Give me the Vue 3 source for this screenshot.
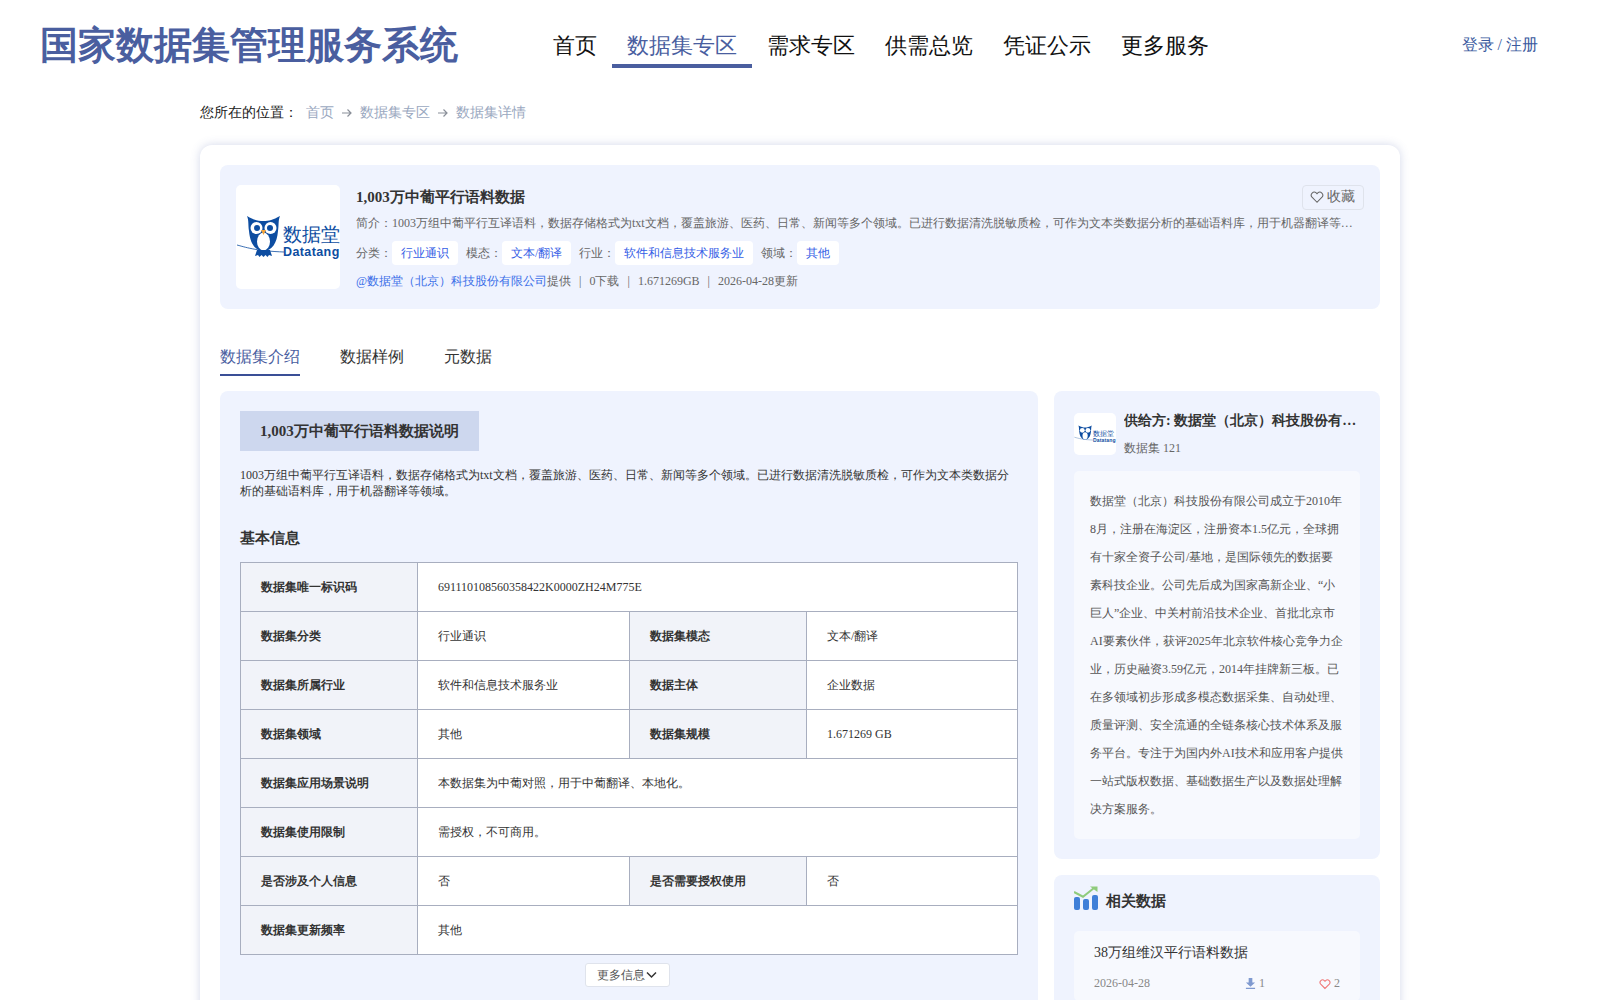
<template>
  <div class="page">
    <header class="top">
      <div class="brand">国家数据集管理服务系统</div>
      <nav class="nav">
        <a v-for="item in navItems" :key="item" :class="['nav-item', { active: item === '数据集专区' }]">{{ item }}</a>
      </nav>
      <div class="login">登录 / 注册</div>
    </header>

    <div class="crumbs">
      <span>您所在的位置：</span>
      <a class="crumb">首页</a>
      <svg class="crumb-arrow" viewBox="0 0 12 12"><path d="M1 6h9M6.500 2.500 10 6l-3.500 3.500" /></svg>
      <a class="crumb">数据集专区</a>
      <svg class="crumb-arrow" viewBox="0 0 12 12"><path d="M1 6h9M6.500 2.500 10 6l-3.500 3.500" /></svg>
      <a class="crumb">数据集详情</a>
    </div>

    <main class="card">
      <section class="hero">
        <div class="logo-box">
          <svg class="logo" viewBox="0 0 104 104">
            <path d="M1 60C12 63 22 66 48 67" fill="none" stroke="#0d4da1" stroke-width="0.8" />
            <path d="M11 31C18 35 22 36 27.500 36C33 36 37 35 44 31C42 36 43 40 42 46C41 58 36 66 27.500 66C19 66 14 58 13 46C12 40 13 36 11 31Z" fill="#0d4da1" />
            <circle cx="20.500" cy="43" r="6" fill="#fff" />
            <circle cx="34.500" cy="43" r="6" fill="#fff" />
            <circle cx="21" cy="43" r="3" fill="#0d4da1" />
            <circle cx="34" cy="43" r="3" fill="#0d4da1" />
            <ellipse cx="27.500" cy="56.500" rx="6.500" ry="9" fill="#fff" />
            <path d="M25 45h5l-2.500 5z" fill="#f2a33a" />
            <path d="M21 65l-2 6 3-1 1.500 2 2-2 2 2 2-2 2 2 1.500-2 3 1-2-6z" fill="#0d4da1" />
            <text class="logo-cn" x="47" y="56">数据堂</text>
            <text class="logo-en" x="47" y="71">Datatang</text>
          </svg>
        </div>
        <div class="hero-body">
          <div class="hero-head">
            <h1 class="hero-title">1,003万中葡平行语料数据</h1>
            <button class="fav-btn">
              <svg class="heart" viewBox="0 0 16 16"><path d="M8 14 2.300 8.200a3.400 3.400 0 0 1 4.800-4.800L8 4.300l.9-.9a3.400 3.400 0 0 1 4.800 4.800z" /></svg>
              收藏
            </button>
          </div>
          <p class="hero-intro">简介：1003万组中葡平行互译语料，数据存储格式为txt文档，覆盖旅游、医药、日常、新闻等多个领域。已进行数据清洗脱敏质检，可作为文本类数据分析的基础语料库，用于机器翻译等领域。</p>
          <div class="hero-tags">
            <template v-for="tag in heroTags" :key="tag.label">
              <span class="tag-label">{{ tag.label }}：</span>
              <span class="tag">{{ tag.value }}</span>
            </template>
          </div>
          <div class="hero-meta">
            <a class="link">@数据堂（北京）科技股份有限公司</a>提供<i>|</i>0下载<i>|</i>1.671269GB<i>|</i>2026-04-28更新
          </div>
        </div>
      </section>

      <div class="tabs">
        <a v-for="tab in tabs" :key="tab" :class="['tab', { active: tab === '数据集介绍' }]">{{ tab }}</a>
      </div>

      <div class="columns">
        <section class="left">
          <div class="section-title">1,003万中葡平行语料数据说明</div>
          <p class="desc">1003万组中葡平行互译语料，数据存储格式为txt文档，覆盖旅游、医药、日常、新闻等多个领域。已进行数据清洗脱敏质检，可作为文本类数据分析的基础语料库，用于机器翻译等领域。</p>
          <h2 class="sub-title">基本信息</h2>
          <table class="info">
            <colgroup>
              <col class="c1" /><col class="c2" /><col class="c3" /><col class="c4" />
            </colgroup>
            <tbody>
              <tr v-for="row in rows" :key="row[0]">
                <th>{{ row[0] }}</th>
                <td v-if="row.length === 2" colspan="3">{{ row[1] }}</td>
                <template v-else>
                  <td>{{ row[1] }}</td>
                  <th>{{ row[2] }}</th>
                  <td>{{ row[3] }}</td>
                </template>
              </tr>
            </tbody>
          </table>
          <div class="more-wrap">
            <button class="more-btn">
              更多信息
              <svg class="chevron" viewBox="0 0 12 12"><path d="M1.500 3.500 6 8l4.500-4.500" /></svg>
            </button>
          </div>
        </section>

        <aside class="right">
          <section class="side-panel">
            <div class="supplier">
              <div class="supplier-logo">
                <svg class="logo" viewBox="0 0 104 104">
                  <path d="M1 60C12 63 22 66 48 67" fill="none" stroke="#0d4da1" stroke-width="0.8" />
                  <path d="M11 31C18 35 22 36 27.500 36C33 36 37 35 44 31C42 36 43 40 42 46C41 58 36 66 27.500 66C19 66 14 58 13 46C12 40 13 36 11 31Z" fill="#0d4da1" />
                  <circle cx="20.500" cy="43" r="6" fill="#fff" />
                  <circle cx="34.500" cy="43" r="6" fill="#fff" />
                  <ellipse cx="27.500" cy="56.500" rx="6.500" ry="9" fill="#fff" />
                  <text class="logo-cn" x="47" y="56">数据堂</text>
                  <text class="logo-en" x="47" y="71">Datatang</text>
                </svg>
              </div>
              <div class="supplier-text">
                <div class="supplier-name">供给方: 数据堂（北京）科技股份有限公司</div>
                <div class="supplier-count">数据集 121</div>
              </div>
            </div>
            <p class="supplier-desc">数据堂（北京）科技股份有限公司成立于2010年8月，注册在海淀区，注册资本1.5亿元，全球拥有十家全资子公司/基地，是国际领先的数据要素科技企业。公司先后成为国家高新企业、“小巨人”企业、中关村前沿技术企业、首批北京市AI要素伙伴，获评2025年北京软件核心竞争力企业，历史融资3.59亿元，2014年挂牌新三板。已在多领域初步形成多模态数据采集、自动处理、质量评测、安全流通的全链条核心技术体系及服务平台。专注于为国内外AI技术和应用客户提供一站式版权数据、基础数据生产以及数据处理解决方案服务。</p>
          </section>

          <section class="side-panel related">
            <div class="related-head">
              <svg class="chart" viewBox="0 0 24 24">
                <rect x="0" y="11" width="6" height="13" rx="2" fill="#3f7fd8" />
                <rect x="9" y="13" width="6" height="11" rx="2" fill="#3f7fd8" />
                <rect x="18" y="9" width="6" height="15" rx="2" fill="#3f7fd8" />
                <path d="M0 6 9 10.700 20 2" fill="none" stroke="#8fcb7c" stroke-width="2" />
                <path d="M16 0.500h7.500V6z" fill="#8fcb7c" />
              </svg>
              <span>相关数据</span>
            </div>
            <div v-for="item in related" :key="item.name" class="related-item">
              <div class="related-name">{{ item.name }}</div>
              <div class="related-meta">
                <span class="related-date">{{ item.date }}</span>
                <span class="related-stats">
                  <span class="stat">
                    <svg class="dl" viewBox="0 0 12 12"><path d="M4 0h4v5h3L6 9.500 1 5h3zM1 10.500h10V12H1z" /></svg>
                    {{ item.downloads }}
                  </span>
                  <span class="stat">
                    <svg class="heart red" viewBox="0 0 16 16"><path d="M8 14 2.300 8.200a3.400 3.400 0 0 1 4.800-4.800L8 4.300l.9-.9a3.400 3.400 0 0 1 4.800 4.800z" /></svg>
                    {{ item.likes }}
                  </span>
                </span>
              </div>
            </div>
          </section>
        </aside>
      </div>
    </main>
  </div>
</template>

<script setup>
const navItems = ['首页', '数据集专区', '需求专区', '供需总览', '凭证公示', '更多服务']
const tabs = ['数据集介绍', '数据样例', '元数据']

const heroTags = [
  { label: '分类', value: '行业通识' },
  { label: '模态', value: '文本/翻译' },
  { label: '行业', value: '软件和信息技术服务业' },
  { label: '领域', value: '其他' }
]

const rows = [
  ['数据集唯一标识码', '691110108560358422K0000ZH24M775E'],
  ['数据集分类', '行业通识', '数据集模态', '文本/翻译'],
  ['数据集所属行业', '软件和信息技术服务业', '数据主体', '企业数据'],
  ['数据集领域', '其他', '数据集规模', '1.671269 GB'],
  ['数据集应用场景说明', '本数据集为中葡对照，用于中葡翻译、本地化。'],
  ['数据集使用限制', '需授权，不可商用。'],
  ['是否涉及个人信息', '否', '是否需要授权使用', '否'],
  ['数据集更新频率', '其他']
]

const related = [
  { name: '38万组维汉平行语料数据', date: '2026-04-28', downloads: 1, likes: 2 }
]
</script>

<style scoped>
.page {
  width: 1600px;
  height: 1000px;
  overflow: hidden;
  background: #fff;
  color: #333;
  font-family: "Liberation Serif", serif;
}

.top {
  display: flex;
  align-items: center;
  height: 90px;
  padding: 0 62px 0 40px;
}

.brand {
  width: 498px;
  font-size: 38px;
  font-weight: 700;
  color: #4a5e9f;
}

.nav {
  display: flex;
  flex: 1;
  align-self: flex-start;
  margin-top: 22px;
}

.nav-item {
  display: flex;
  align-items: center;
  box-sizing: border-box;
  height: 46px;
  padding: 6px 15px 0;
  border-bottom: 4px solid transparent;
  font-size: 22px;
  color: #111;
}

.nav-item.active {
  color: #4a5e9f;
  border-bottom-color: #4a5e9f;
}

.login {
  font-size: 16px;
  color: #3b5a9e;
}

.crumbs {
  display: flex;
  align-items: center;
  height: 46px;
  padding-left: 200px;
  font-size: 14px;
  color: #222;
}

.crumb {
  color: #9aa8c0;
}

.crumb:first-of-type {
  margin-left: 8px;
}

.crumb-arrow {
  width: 12px;
  height: 12px;
  margin: 0 7px;
  fill: none;
  stroke: #8a8f99;
  stroke-width: 1.2;
}

.card {
  width: 1160px;
  margin: 9px 0 0 200px;
  padding: 20px;
  border-radius: 12px;
  background: #fff;
  box-shadow: 0 0 10px rgba(80, 100, 170, 0.25);
}

.hero {
  display: flex;
  gap: 16px;
  padding: 20px 16px;
  border-radius: 8px;
  background: #eff3fe;
}

.logo-box {
  display: flex;
  flex: none;
  width: 104px;
  height: 104px;
  border-radius: 5px;
  background: #fff;
}

.logo {
  width: 100%;
  height: 100%;
}

.logo-cn {
  font-size: 18.500px;
  fill: #0d4da1;
}

.logo-en {
  font-family: "Liberation Sans", sans-serif;
  font-size: 12.500px;
  font-weight: 700;
  letter-spacing: 0.4px;
  fill: #0d4da1;
}

.hero-body {
  flex: 1;
  min-width: 0;
}

.hero-head {
  display: flex;
  align-items: center;
  justify-content: space-between;
  height: 24px;
}

.hero-title {
  margin: 0;
  font-size: 15px;
  font-weight: 700;
  color: #333;
}

.fav-btn {
  display: flex;
  align-items: center;
  gap: 3px;
  height: 25px;
  padding: 0 8px 0 7px;
  border: 1px solid #dfe3ec;
  border-radius: 4px;
  background: transparent;
  font: inherit;
  font-size: 14px;
  color: #666;
}

.heart {
  width: 14px;
  height: 14px;
  fill: none;
  stroke: #666;
  stroke-width: 1.2;
}

.heart.red {
  width: 12px;
  height: 12px;
  stroke: #f07a7a;
  stroke-width: 1.500;
}

.hero-intro {
  margin: 5px 0 0;
  overflow: hidden;
  font-size: 12px;
  line-height: 18px;
  color: #666;
  white-space: nowrap;
  text-overflow: ellipsis;
}

.hero-tags {
  display: flex;
  align-items: center;
  height: 24px;
  margin-top: 9px;
  font-size: 12px;
  color: #666;
}

.tag {
  margin-right: 8px;
  padding: 0 9px;
  border-radius: 4px;
  background: #fff;
  color: #3560e6;
  line-height: 24px;
}

.hero-meta {
  margin-top: 8px;
  font-size: 12px;
  line-height: 16px;
  color: #666;
}

.hero-meta i {
  margin: 0 8px;
  font-style: normal;
}

.link {
  color: #3a6ee8;
}

.tabs {
  display: flex;
  gap: 40px;
  margin-top: 26px;
}

.tab {
  height: 41px;
  padding-top: 12px;
  box-sizing: border-box;
  border-bottom: 2px solid transparent;
  font-size: 16px;
  color: #333;
}

.tab.active {
  color: #4a5e9f;
  border-bottom-color: #3a4f96;
}

.columns {
  display: flex;
  align-items: flex-start;
  gap: 16px;
  margin-top: 15px;
}

.left {
  width: 778px;
  padding: 20px;
  border-radius: 8px;
  background: #eff3fe;
}

.section-title {
  display: inline-block;
  padding: 0 20px;
  background: #cdd7ee;
  font-size: 15px;
  font-weight: 700;
  line-height: 40px;
  color: #333;
}

.desc {
  margin: 16px 0 0;
  font-size: 12px;
  line-height: 16px;
  color: #333;
}

.sub-title {
  margin: 27px 0 0;
  font-size: 15px;
  font-weight: 700;
  line-height: 24px;
  color: #333;
}

.info {
  width: 778px;
  margin-top: 12px;
  border-collapse: collapse;
  table-layout: fixed;
  background: #fff;
  font-size: 12px;
}

.c1,
.c3 {
  width: 177px;
}

.c2 {
  width: 212px;
}

.info th,
.info td {
  height: 48px;
  padding: 0 20px;
  border: 1px solid #a8aebf;
  text-align: left;
  color: #333;
}

.info th {
  background: #f1f3f9;
  font-weight: 700;
}

.more-wrap {
  display: flex;
  justify-content: center;
  margin-top: 8px;
  padding-right: 3px;
}

.more-btn {
  display: flex;
  align-items: center;
  height: 24px;
  padding: 0 11px;
  border: 1px solid #dfe3ec;
  border-radius: 3px;
  background: #fff;
  font: inherit;
  font-size: 12px;
  color: #555;
}

.chevron {
  width: 13px;
  height: 12px;
  fill: none;
  stroke: #333;
  stroke-width: 1.5;
}

.right {
  display: flex;
  flex-direction: column;
  gap: 16px;
  width: 326px;
}

.side-panel {
  padding: 20px;
  border-radius: 8px;
  background: #eff3fe;
}

.supplier {
  display: flex;
  gap: 8px;
  align-items: center;
}

.supplier-logo {
  display: flex;
  flex: none;
  width: 42px;
  height: 42px;
  border-radius: 5px;
  background: #fff;
}

.supplier-text {
  min-width: 0;
}

.supplier-name {
  overflow: hidden;
  font-size: 14px;
  font-weight: 700;
  line-height: 20px;
  color: #333;
  white-space: nowrap;
  text-overflow: ellipsis;
}

.supplier-count {
  margin-top: 8px;
  font-size: 12px;
  line-height: 18px;
  color: #666;
}

.supplier-desc {
  margin: 14px 0 0;
  padding: 16px;
  border-radius: 5px;
  background: #f7f9fe;
  font-size: 12px;
  line-height: 28px;
  color: #555;
}

.related {
  padding-top: 12px;
}

.related-head {
  display: flex;
  align-items: center;
  gap: 8px;
  height: 28px;
  font-size: 15px;
  font-weight: 700;
  color: #333;
}

.chart {
  width: 24px;
  height: 24px;
  margin-bottom: 6px;
}

.related-item {
  margin-top: 16px;
  padding: 11px 20px 10px;
  border-radius: 5px;
  background: #f7f9fe;
}

.related-name {
  font-size: 14px;
  line-height: 22px;
  color: #333;
}

.related-meta {
  display: flex;
  justify-content: space-between;
  margin-top: 12px;
  font-size: 12px;
  color: #888;
}

.related-stats {
  display: flex;
  gap: 54px;
}

.stat {
  display: flex;
  align-items: center;
  gap: 3px;
}

.dl {
  width: 11px;
  height: 11px;
  fill: #7f9ad0;
}
</style>
